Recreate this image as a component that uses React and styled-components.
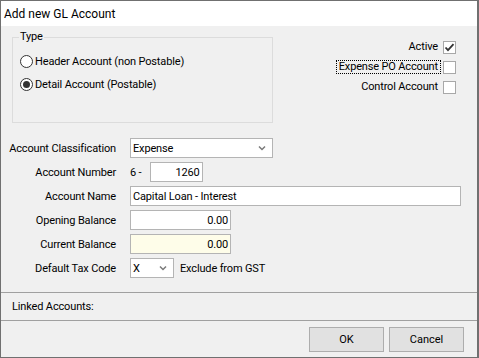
import React from 'react';
import styled, { createGlobalStyle } from 'styled-components';

const GlobalStyle = createGlobalStyle`
	html, body {
		margin: 0;
		padding: 0;
		background: #f0f0f0;
	}
	body {
		font-family: Roboto, 'Liberation Sans', sans-serif;
		font-size: 11px;
		letter-spacing: -0.15px;
		color: #000;
	}
`;

const Window = styled.div`
	width: 479px;
	height: 358px;
	box-sizing: border-box;
	border: 1px solid #707070;
	border-right-width: 2px;
	display: flex;
	flex-flow: column;
	background: #f0f0f0;
	overflow: hidden;
`;

const TitleBar = styled.div`
	height: 25px;
	display: flex;
	align-items: center;
	padding-left: 3px;
	background: #fff;
	font-size: 12px;
	letter-spacing: 0;
	flex-shrink: 0;
`;

const Body = styled.div`
	flex: 1;
	display: flex;
	flex-flow: column;
`;

const TopSection = styled.div`
	display: flex;
	justify-content: space-between;
	align-items: flex-start;
	padding: 11px 21px 0 11px;
`;

const GroupBox = styled.div`
	position: relative;
	box-sizing: border-box;
	width: 261px;
	height: 86px;
	border: 1px solid #dcdcdc;
	padding: 14px 0 0 7px;
	display: flex;
	flex-flow: column;
	gap: 5px;
`;

const GroupTitle = styled.span`
	position: absolute;
	top: -8px;
	left: 6px;
	padding: 0 1px;
	line-height: 14px;
	background: #f0f0f0;
`;

const RadioRow = styled.label`
	display: flex;
	align-items: center;
	gap: 2px;
	height: 18px;
`;

const RadioDot = styled.span`
	box-sizing: border-box;
	width: 13px;
	height: 13px;
	border-radius: 50%;
	border: 1px solid #333;
	background: #fff;
	display: flex;
	align-items: center;
	justify-content: center;
	&::after {
		content: '';
		width: 7px;
		height: 7px;
		border-radius: 50%;
		background: ${(props) => (props.checked ? '#333' : 'transparent')};
	}
`;

const Checks = styled.div`
	display: flex;
	flex-flow: column;
	align-items: flex-end;
`;

const CheckRow = styled.div`
	display: flex;
	align-items: center;
	height: 20px;
`;

const CheckLabel = styled.span`
	padding: 0 2px;
	line-height: 12px;
	border: 1px dotted ${(props) => (props.focused ? '#000' : 'transparent')};
	margin-right: 2px;
`;

const CheckBox = styled.span`
	box-sizing: border-box;
	width: 13px;
	height: 13px;
	border: 1px solid #a8a8a8;
	background: #fff;
	display: flex;
	align-items: center;
	justify-content: center;
`;

const Form = styled.div`
	display: grid;
	grid-template-columns: 115px 1fr;
	grid-auto-rows: 20px;
	column-gap: 14px;
	row-gap: 4px;
	margin-top: 15px;
`;

const FieldLabel = styled.div`
	display: flex;
	align-items: center;
	justify-content: flex-end;
`;

const FieldCell = styled.div`
	display: flex;
	align-items: center;
	gap: ${(props) => props.gap || 0}px;
`;

const Field = styled.div`
	box-sizing: border-box;
	height: 20px;
	width: ${(props) => props.width}px;
	border: 1px solid #b4b4b4;
	background: ${(props) => (props.highlight ? '#fefde9' : '#fff')};
	display: flex;
	align-items: center;
	justify-content: ${(props) => (props.right ? 'flex-end' : 'space-between')};
	padding: 0 2px;
`;

const Chevron = styled.svg`
	margin-right: 4px;
`;

const Separator = styled.div`
	height: 1px;
	background: #a0a0a0;
	margin-top: ${(props) => props.top || 0}px;
`;

const LinkedRow = styled.div`
	height: 27px;
	display: flex;
	align-items: center;
	padding-left: 11px;
`;

const Footer = styled.div`
	flex: 1;
	display: flex;
	justify-content: flex-end;
	align-items: flex-start;
	gap: 5px;
	padding: 6px 13px 0 0;
`;

const Button = styled.button`
	box-sizing: border-box;
	width: 75px;
	height: 25px;
	border: 1px solid #adadad;
	background: #e1e1e1;
	font-family: Roboto, 'Liberation Sans', sans-serif;
	font-size: 11px;
	color: #000;
	padding: 0;
`;

const Caret = () => (
	<Chevron width="8" height="6" viewBox="0 0 8 6">
		<path d="M1 1.5 L4 4.5 L7 1.5" fill="none" stroke="#7a7a7a" strokeWidth="1.5" />
	</Chevron>
);

const Tick = () => (
	<svg width="11" height="11" viewBox="0 0 11 11">
		<path d="M1.5 5.5 L4 8.2 L9.5 2.2" fill="none" stroke="#333" strokeWidth="1.8" />
	</svg>
);

export default function App() {
	return (
		<>
			<GlobalStyle />
			<Window>
				<TitleBar>Add new GL Account</TitleBar>
				<Body>
					<TopSection>
						<GroupBox>
							<GroupTitle>Type</GroupTitle>
							<RadioRow>
								<RadioDot />
								Header Account (non Postable)
							</RadioRow>
							<RadioRow>
								<RadioDot checked />
								Detail Account (Postable)
							</RadioRow>
						</GroupBox>
						<Checks>
							<CheckRow>
								<CheckLabel>Active</CheckLabel>
								<CheckBox><Tick /></CheckBox>
							</CheckRow>
							<CheckRow>
								<CheckLabel focused>Expense PO Account</CheckLabel>
								<CheckBox />
							</CheckRow>
							<CheckRow>
								<CheckLabel>Control Account</CheckLabel>
								<CheckBox />
							</CheckRow>
						</Checks>
					</TopSection>
					<Form>
						<FieldLabel>Account Classification</FieldLabel>
						<FieldCell>
							<Field width={143}>
								Expense
								<Caret />
							</Field>
						</FieldCell>

						<FieldLabel>Account Number</FieldLabel>
						<FieldCell gap={8}>
							6 -
							<Field width={53} right>1260</Field>
						</FieldCell>

						<FieldLabel>Account Name</FieldLabel>
						<FieldCell>
							<Field width={331}>Capital Loan - Interest</Field>
						</FieldCell>

						<FieldLabel>Opening Balance</FieldLabel>
						<FieldCell>
							<Field width={101} right>0.00</Field>
						</FieldCell>

						<FieldLabel>Current Balance</FieldLabel>
						<FieldCell>
							<Field width={101} right highlight>0.00</Field>
						</FieldCell>

						<FieldLabel>Default Tax Code</FieldLabel>
						<FieldCell gap={6}>
							<Field width={44}>
								X
								<Caret />
							</Field>
							Exclude from GST
						</FieldCell>
					</Form>
					<Separator top={14} />
					<LinkedRow>Linked Accounts:</LinkedRow>
					<Separator />
					<Footer>
						<Button>OK</Button>
						<Button>Cancel</Button>
					</Footer>
				</Body>
			</Window>
		</>
	);
}
